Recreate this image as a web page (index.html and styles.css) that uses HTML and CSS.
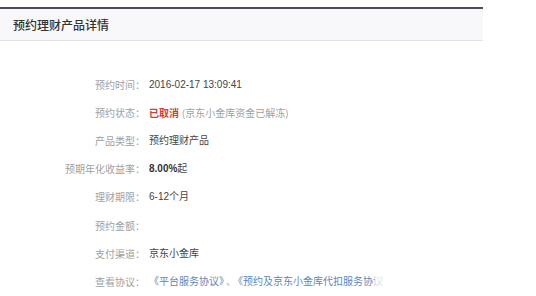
FILE: index.html
```html
<!DOCTYPE html>
<html>
<head>
<meta charset="utf-8">
<link rel="stylesheet" href="styles.css">
</head>
<body>
<div class="panel">
  <div class="head"><h1 class="title">预约理财产品详情</h1></div>
  <div class="rows">
    <div class="row"><span class="lbl">预约时间：</span><span class="val">2016-02-17 13:09:41</span></div>
    <div class="row"><span class="lbl">预约状态：</span><span class="val"><b class="red">已取消</b> <span class="note">(京东小金库资金已解冻)</span></span></div>
    <div class="row"><span class="lbl">产品类型：</span><span class="val">预约理财产品</span></div>
    <div class="row"><span class="lbl">预期年化收益率：</span><span class="val"><b class="bold">8.00%</b>起</span></div>
    <div class="row"><span class="lbl">理财期限：</span><span class="val">6-12个月</span></div>
    <div class="row"><span class="lbl">预约金额：</span><span class="val"></span></div>
    <div class="row"><span class="lbl">支付渠道：</span><span class="val">京东小金库</span></div>
    <div class="row"><span class="lbl">查看协议：</span><span class="val"><span class="link">《平台服务协议》</span><span class="sep">、</span><span class="link">《预约及京东小金库代扣服务协议</span></span></div>
  </div>
</div>
<div class="fade"></div>
</body>
</html>
```
FILE: styles.css
```css
html, body { margin: 0; padding: 0; background: #fff; }
body {
  width: 536px; height: 296px; overflow: hidden; position: relative;
  font-family: "Noto Sans CJK SC", "Liberation Sans", sans-serif;
}
.panel { width: 483px; margin-top: 7px; }
.head {
  border-top: 2px solid #4b4b5b;
  background: #f8f8fa;
  border-bottom: 1px solid #e3e3e6;
  height: 31px;
  display: flex; align-items: center;
  padding-left: 13px;
}
.title { margin: 0; font-size: 12px; font-weight: 500; color: #333; line-height: 14px; }
.rows { padding-top: 30px; display: flex; flex-direction: column; }
.row { display: flex; height: 28.1px; align-items: center; font-size: 10px; line-height: 14px; }
.lbl { width: 145px; text-align: right; color: #a0a0a0; flex: none; }
.val { padding-left: 4px; color: #444; font-family: "Liberation Sans", "Noto Sans CJK SC", sans-serif; }
.red { color: #d23b3b; font-weight: bold; font-family: "Noto Sans CJK SC", sans-serif; }
.note { color: #a0a0a0; font-family: "Noto Sans CJK SC", sans-serif; }
.bold { font-weight: bold; color: #333; }
.link { color: #5f86b8; font-family: "Noto Sans CJK SC", sans-serif; }
.sep { color: #999; padding: 0 2px; }
.fade {
  position: absolute; left: 375px; top: 252px; width: 130px; height: 44px;
  background: rgba(255,255,255,0.75);
}
```
